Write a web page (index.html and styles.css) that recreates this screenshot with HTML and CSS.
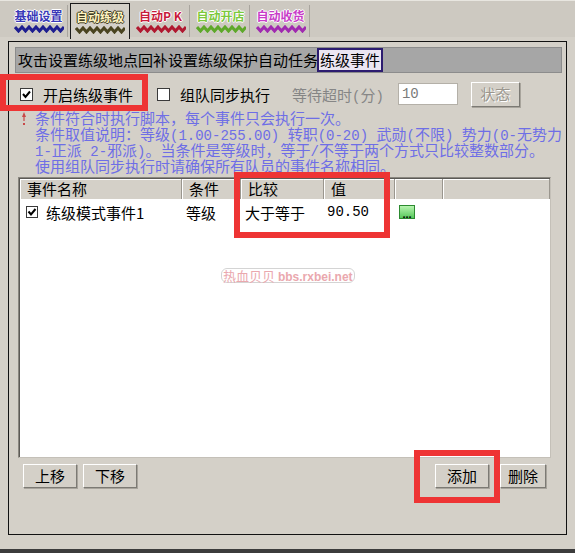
FILE: index.html
```html
<!DOCTYPE html>
<html lang="zh-CN">
<head>
    <meta charset="UTF-8">
    <title>自动练级 - 练级事件</title>
    <link rel="stylesheet" href="styles.css">
</head>
<body>
    <div class="tabs">
        <div class="tab tab-blue">
            <span class="tab-label">基础设置</span>
            <svg class="wave" width="50" height="8" viewBox="0 0 50 8"><path d="M1 2 L4.5 6 L8 2 L11.5 6 L15 2 L18.5 6 L22 2 L25.5 6 L29 2 L32.5 6 L36 2 L39.5 6 L43 2 L46.5 6 L50 2" fill="none" stroke="#1e1e90" stroke-width="3"/></svg>
        </div>
        <div class="tab tab-olive active">
            <span class="tab-label">自动练级</span>
            <svg class="wave" width="50" height="8" viewBox="0 0 50 8"><path d="M1 2 L4.5 6 L8 2 L11.5 6 L15 2 L18.5 6 L22 2 L25.5 6 L29 2 L32.5 6 L36 2 L39.5 6 L43 2 L46.5 6 L50 2" fill="none" stroke="#4a4420" stroke-width="3"/></svg>
        </div>
        <div class="tab tab-red">
            <span class="tab-label">自动P K</span>
            <svg class="wave" width="50" height="8" viewBox="0 0 50 8"><path d="M1 2 L4.5 6 L8 2 L11.5 6 L15 2 L18.5 6 L22 2 L25.5 6 L29 2 L32.5 6 L36 2 L39.5 6 L43 2 L46.5 6 L50 2" fill="none" stroke="#b01830" stroke-width="3"/></svg>
        </div>
        <div class="tab tab-green">
            <span class="tab-label">自动开店</span>
            <svg class="wave" width="50" height="8" viewBox="0 0 50 8"><path d="M1 2 L4.5 6 L8 2 L11.5 6 L15 2 L18.5 6 L22 2 L25.5 6 L29 2 L32.5 6 L36 2 L39.5 6 L43 2 L46.5 6 L50 2" fill="none" stroke="#5ea82a" stroke-width="3"/></svg>
        </div>
        <div class="tab tab-purple">
            <span class="tab-label">自动收货</span>
            <svg class="wave" width="50" height="8" viewBox="0 0 50 8"><path d="M1 2 L4.5 6 L8 2 L11.5 6 L15 2 L18.5 6 L22 2 L25.5 6 L29 2 L32.5 6 L36 2 L39.5 6 L43 2 L46.5 6 L50 2" fill="none" stroke="#a02ab0" stroke-width="3"/></svg>
        </div>
    </div>

    <div class="frame">
        <div class="subtabs">
            <span>攻击设置</span><span>练级地点</span><span>回补设置</span><span>练级保护</span><span>自动任务</span><span class="subtab-active">练级事件</span>
        </div>

        <div class="options">
            <span class="checkbox checked"><svg width="11" height="11" viewBox="0 0 11 11"><polyline points="2,5 4.5,8 9,2.5" fill="none" stroke="#000" stroke-width="2"/></svg></span>
            <span class="opt-label">开启练级事件</span>
            <span class="checkbox checkbox-2"></span>
            <span class="opt-label">组队同步执行</span>
            <span class="opt-label muted">等待超时<span class="d">(</span>分<span class="d">)</span></span>
            <span class="field">10</span>
            <span class="btn btn-disabled">状态</span>
        </div>

        <div class="info">
            <svg class="info-icon" width="8" height="15" viewBox="0 0 8 15"><path d="M4 0 L6 5 L4.6 5 L4.6 9 L3.4 9 L3.4 5 L2 5 Z" fill="#c84848"/><rect x="3" y="11" width="2" height="2" fill="#c84848"/></svg>
            <div class="info-text">
                <div class="line">条件符合时执行脚本，每个事件只会执行一次。</div>
                <div class="line">条件取值说明：等级<span class="d">(1.00-255.00) </span>转职<span class="d">(0-20) </span>武勋<span class="d">(</span>不限<span class="d">) </span>势力<span class="d">(0-</span>无势力</div>
                <div class="line"><span class="d">1-</span>正派<span class="d"> 2-</span>邪派<span class="d">)</span>。当条件是等级时，等于<span class="d">/</span>不等于两个方式只比较整数部分。</div>
                <div class="line">使用组队同步执行时请确保所有队员的事件名称相同。</div>
            </div>
        </div>

        <div class="list">
            <div class="list-head">
                <span>事件名称</span><span>条件</span><span>比较</span><span>值</span><span></span><span></span>
            </div>
            <div class="list-row">
                <span class="cell-name"><span class="checkbox small checked"><svg width="10" height="10" viewBox="0 0 10 10"><polyline points="1.5,4.5 4,7.5 8.5,2" fill="none" stroke="#000" stroke-width="2"/></svg></span>练级模式事件1</span>
                <span>等级</span>
                <span>大于等于</span>
                <span class="num">90.50</span>
                <span><span class="dots">...</span></span>
                <span></span>
            </div>
        </div>

        <div class="actions">
            <span class="btn">上移</span>
            <span class="btn">下移</span>
            <span class="spacer"></span>
            <span class="btn">添加</span>
            <span class="btn btn-narrow">删除</span>
        </div>
    </div>
    <div class="bottom-edge"></div>

    <div class="watermark">热血贝贝 <b>bbs.rxbei.net</b></div>
    <div class="mark mark-check"></div>
    <div class="mark mark-compare"></div>
    <div class="mark mark-add"></div>
</body>
</html>
```

FILE: styles.css
```css
body {
    margin: 0;
    width: 575px;
    height: 553px;
    background: #d4d0c8;
    font-family: "Noto Sans CJK SC", "Liberation Sans", sans-serif;
    font-size: 15px;
    color: #000;
    position: relative;
    overflow: hidden;
}

/* top tab strip */
.tabs {
    height: 37px;
    box-sizing: border-box;
    padding: 4px 0 0 10px;
    display: flex;
    gap: 2px;
    background: #cdc9c1;
    border-top: 1px solid #e8e6e0;
}
.tab {
    width: 58px;
    height: 32px;
    box-sizing: border-box;
    display: flex;
    flex-direction: column;
    align-items: center;
    padding-top: 3px;
    border-right: 1px solid #a9a59e;
}
.tab.active {
    width: 60px;
    height: 36px;
    background: #d4d0c8;
    border: 1px solid #1a1a1a;
    border-bottom: none;
    margin-top: -2px;
    padding-top: 5px;
}
.tab-label {
    font-size: 12px;
    line-height: 16px;
    font-weight: bold;
    white-space: pre;
}
.wave {
    display: block;
    margin-top: 1px;
}
.tab-blue .tab-label {
    color: #3838b8;
    text-shadow: -1px 0 #fff, 1px 0 #fff, 0 -1px #fff, 0 1px #fff;
}
.tab-olive .tab-label {
    color: #fff4c0;
    text-shadow: -1px 0 #3c3820, 1px 0 #3c3820, 0 -1px #3c3820, 0 1px #3c3820;
}
.tab-red .tab-label {
    color: #c81c3c;
    text-shadow: -1px 0 #fff, 1px 0 #fff, 0 -1px #fff, 0 1px #fff;
}
.tab-green .tab-label {
    color: #7cc83c;
    text-shadow: -1px 0 #fff, 1px 0 #fff, 0 -1px #fff, 0 1px #fff;
}
.tab-purple .tab-label {
    color: #c83cc8;
    text-shadow: -1px 0 #fff, 1px 0 #fff, 0 -1px #fff, 0 1px #fff;
}

/* main frame */
.frame {
    margin: 4px 8px 0 8px;
    height: 494px;
    box-sizing: border-box;
    border: 1px solid #111;
    display: flex;
    flex-direction: column;
}
.subtabs {
    margin: 5px 4px 0 6px;
    height: 26px;
    box-sizing: border-box;
    background: #a6a6a6;
    border: 1px solid #8c8c8c;
    display: flex;
    align-items: center;
    padding-left: 2px;
    line-height: 20px;
    white-space: nowrap;
}
.subtab-active {
    background: #ebe6f2;
    border: 2px solid #2c1c70;
    padding: 0 1px;
    margin-left: -1px;
}

.d {
    font-family: "Liberation Mono", monospace;
    font-size: 14px;
    line-height: 0;
}

.options {
    margin-top: 8px;
    height: 26px;
    display: flex;
    align-items: center;
    padding-left: 11px;
    white-space: nowrap;
}
.checkbox {
    width: 13px;
    height: 13px;
    box-sizing: border-box;
    background: #fff;
    border: 1px solid #3a3a3a;
    display: inline-flex;
    align-items: center;
    justify-content: center;
    flex-shrink: 0;
}
.checkbox.small {
    width: 12px;
    height: 12px;
    margin-right: 8px;
}
.checkbox-2 {
    margin-left: 24px;
}
.opt-label {
    margin-left: 10px;
}
.muted {
    color: #868686;
    margin-left: 22px;
}
.field {
    margin-left: 14px;
    width: 60px;
    height: 22px;
    box-sizing: border-box;
    background: #fff;
    border: 1px solid #b4b0a8;
    color: #7a7a7a;
    font-family: "Liberation Mono", monospace;
    font-size: 14px;
    line-height: 20px;
    padding-left: 3px;
}
.btn {
    width: 54px;
    height: 24px;
    box-sizing: border-box;
    display: inline-flex;
    align-items: center;
    justify-content: center;
    background: #d4d0c8;
    border: 1px solid;
    border-color: #fff #7c7a74 #7c7a74 #fff;
    box-shadow: 1px 1px 0 #a8a49c;
    line-height: 20px;
}
.btn-disabled {
    margin-left: 13px;
    width: 49px;
    height: 25px;
    color: #9a968e;
    text-shadow: 1px 1px 0 #fff;
}

.info {
    margin-top: 3px;
    display: flex;
    padding-left: 11px;
}
.info-icon {
    margin-top: 2px;
    flex-shrink: 0;
}
.info-text {
    margin-left: 7px;
    color: #6e6ee6;
    font-size: 15px;
    white-space: nowrap;
}
.info-text .line {
    height: 16px;
    line-height: 16px;
}

/* event list */
.list {
    margin: 3px 0 0 9px;
    width: 533px;
    height: 281px;
    box-sizing: border-box;
    background: #fff;
    border: 1px solid;
    border-color: #8a8780 #c4c0b8 #c4c0b8 #8a8780;
    box-shadow: inset 1px 1px 0 #5c5a56;
}
.list-head,
.list-row {
    display: grid;
    grid-template-columns: 162px 59px 83px 71px 48px 1fr;
}
.list-head {
    height: 20px;
    margin: 1px 0 0 1px;
    background: #d4d0c8;
    line-height: 20px;
}
.list-head span {
    padding-left: 7px;
    border-right: 1px solid #9a968e;
    box-shadow: inset 1px 1px 0 #fff;
}
.list-row {
    height: 26px;
    align-items: center;
    padding-left: 1px;
}
.list-row span {
    padding-left: 4px;
    display: flex;
    align-items: center;
}
.list-row .cell-name {
    padding-left: 6px;
}
.list-row .num {
    font-family: "Liberation Mono", monospace;
    font-size: 14px;
    padding-left: 3px;
}
.list-row .checkbox.small {
    padding: 0;
}
.list-row .dots {
    width: 16px;
    height: 14px;
    box-sizing: border-box;
    padding: 0;
    justify-content: center;
    align-items: flex-end;
    background: linear-gradient(#b8f4b0, #56c85a);
    border: 1px solid #2c8a30;
    font-size: 11px;
    font-weight: bold;
    line-height: 8px;
    font-family: "Liberation Sans", sans-serif;
}

.actions {
    margin-top: 6px;
    display: flex;
    padding: 0 20px 0 14px;
}
.actions .btn + .btn {
    margin-left: 6px;
}
.actions .btn + .btn-narrow {
    width: 46px;
    margin-left: 11px;
}
.spacer {
    flex: 1;
}

.bottom-edge {
    margin-top: 14px;
    height: 5px;
    background: #3c3c3c;
}

/* overlays */
.watermark {
    position: absolute;
    left: 221px;
    top: 268px;
    width: 134px;
    height: 15px;
    box-sizing: border-box;
    border: 1px solid #d4d4d4;
    border-radius: 6px;
    color: #eaa8ae;
    font-size: 13px;
    line-height: 13px;
    padding-left: 1px;
    white-space: nowrap;
}
.watermark b {
    font-family: "Liberation Sans", sans-serif;
    font-size: 12px;
}
.mark {
    position: absolute;
    border: 6px solid #ee3434;
    box-sizing: border-box;
}
.mark-check {
    left: 0;
    top: 74px;
    width: 148px;
    height: 37px;
}
.mark-compare {
    left: 234px;
    top: 172px;
    width: 156px;
    height: 66px;
}
.mark-add {
    left: 414px;
    top: 450px;
    width: 86px;
    height: 53px;
}
```
